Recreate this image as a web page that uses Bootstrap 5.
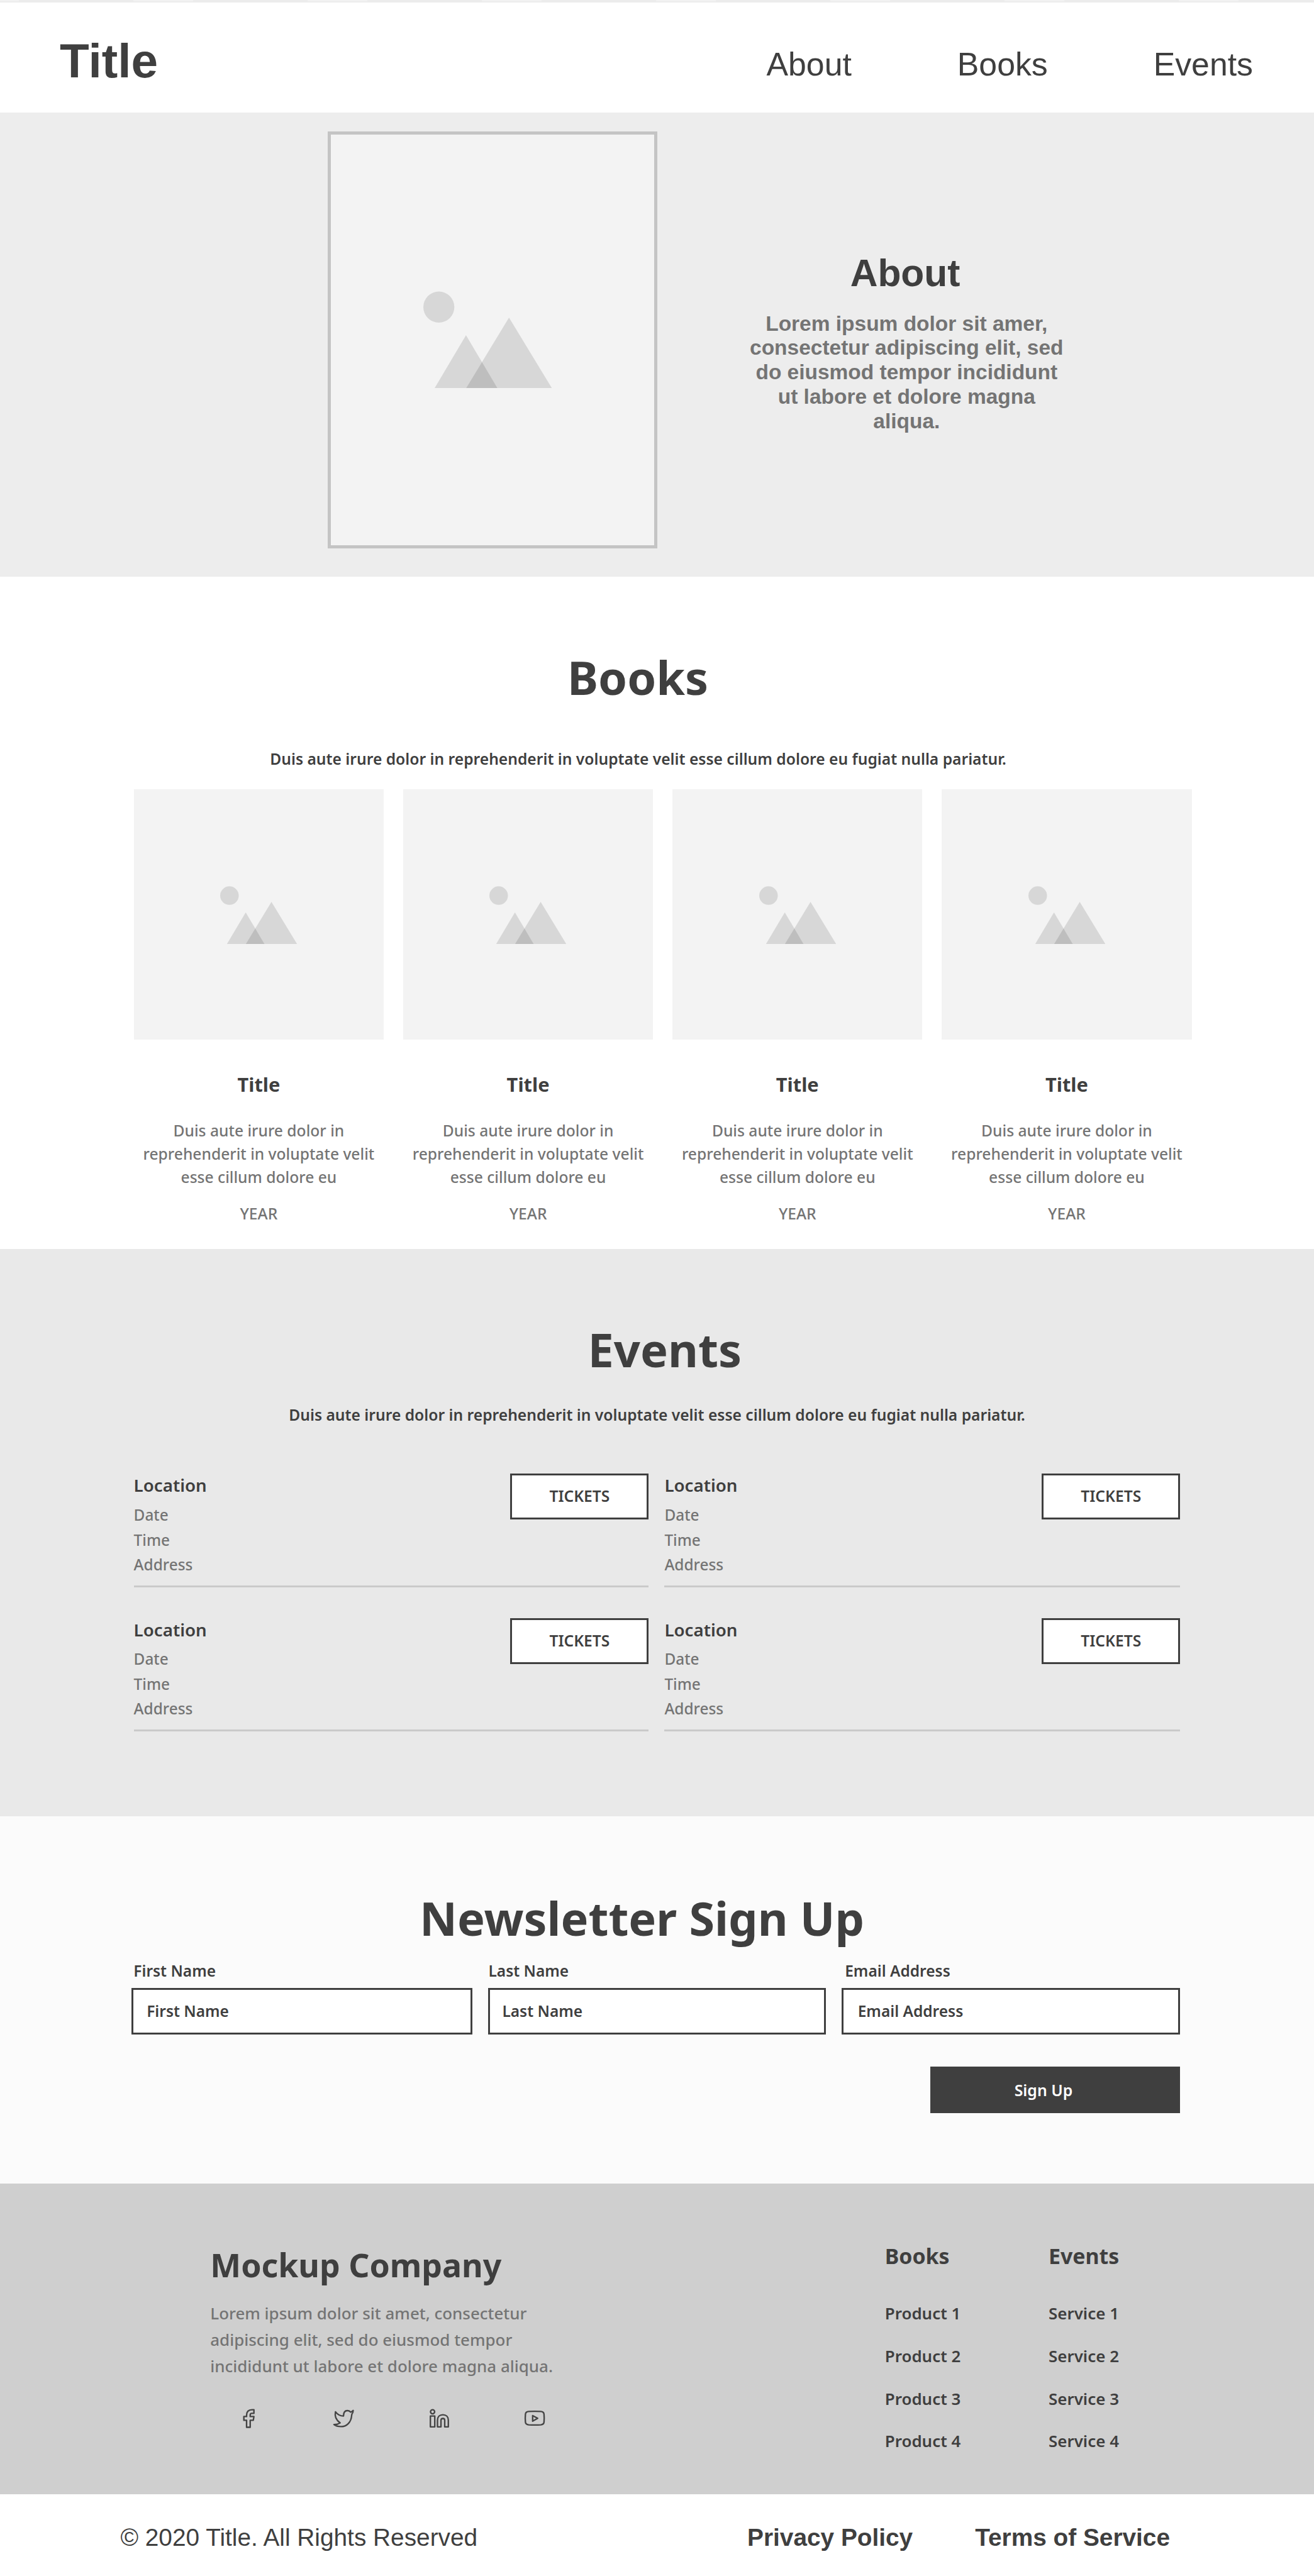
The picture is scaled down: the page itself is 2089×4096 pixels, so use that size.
<!DOCTYPE html>
<html lang="en">
<head>
<meta charset="utf-8">
<meta name="viewport" content="width=device-width, initial-scale=1">
<title>Title</title>
<link href="https://cdn.jsdelivr.net/npm/bootstrap@5.3.0/dist/css/bootstrap.min.css" rel="stylesheet">
<style>
  :root { --ink: #3f3f3f; --soft: #747474; }
  body { font-family: "Noto Sans", sans-serif; color: var(--ink); font-size: 24.62px; background: #fff; }
  h1, h2, h3, p, ul { margin: 0; }
  a { color: inherit; text-decoration: none; }
  .arial { font-family: "Liberation Sans", Arial, sans-serif; }
  .soft { color: var(--soft); }

  .top-strip { height: 3.7px; background: repeating-linear-gradient(90deg, #f2f2f2 0 95px, #ececec 95px 277px) -65px 0 / 2160px 2px no-repeat #ececec; }
  .site-header { height: 175.5px; padding: 48.5px 97px 0 95.1px; }
  .site-header .navbar-brand { font-size: 76.5px; line-height: 90px; font-weight: 700; color: var(--ink); padding: 0; margin: 0; }
  .main-links { gap: 167.9px; padding-top: 19.7px; font-size: 51.8px; line-height: 60px; }
  .main-links .nav-link { padding: 0; color: var(--ink); }

  .hero { height: 738.1px; background: #ededed; padding: 29.6px 0 0 520.5px; gap: 141px; }
  .hero-img { width: 524.8px; height: 663px; border: 5px solid #c4c4c4; background: #f3f3f3; }
  .hero-img svg { width: 204.6px; height: 154.6px; margin: 248.9px 0 0 147px; }
  .hero-text { width: 510px; padding-top: 190.2px; }
  .hero-text h2 { font-size: 60.5px; line-height: 70px; font-weight: 700; padding-right: 4.5px; }
  .hero-text p { margin-top: 26.6px; font-size: 33.48px; line-height: 38.85px; font-weight: 700; }

  .sec-title { font-size: 73.8px; line-height: 100px; font-weight: 700; }
  .sec-sub { line-height: 37px; font-weight: 600; }

  .books { height: 1069.2px; padding-top: 109.7px; }
  .books .sec-title { padding-right: 61px; }
  .books .sec-sub { margin-top: 60.9px; padding-right: 60px; }
  .book-grid { gap: 30.8px; margin: 30.6px 0 0 212.7px; }
  .book-item { width: 397.4px; }
  .book-img { height: 397.5px; background: #f3f3f3; }
  .book-img svg { width: 122.5px; height: 92.4px; margin: 153.1px 0 0 137.5px; }
  .book-item h3 { margin-top: 50px; font-size: 30.8px; line-height: 42px; font-weight: 700; }
  .book-item p { line-height: 36.9px; font-weight: 500; }
  .book-desc { margin-top: 35.2px; }
  .book-year { margin-top: 21.3px; }

  .events { height: 901.7px; background: #e9e9e9; padding-top: 109.3px; }
  .events .sec-title { padding-left: 24.5px; }
  .events .sec-sub { margin-top: 35.2px; }
  .event-grid { display: grid; grid-template-columns: 818.8px 819.8px; gap: 46.8px 25px; margin: 73.4px 0 0 212.6px; }
  .event-item { height: 182.6px; border-bottom: 3px solid #cacaca; }
  .event-item h3 { font-size: 27.7px; line-height: 40px; font-weight: 600; margin-bottom: 7.7px; }
  .event-item li { font-size: 24.4px; line-height: 39.5px; font-weight: 500; }
  .btn-box { border-radius: 0; border: 3px solid var(--ink); background: #fff; color: var(--ink); width: 220px; height: 73px; margin-top: 2px; padding: 0; font-size: 24.62px; font-weight: 600; }

  .signup { height: 583.5px; background: #fbfbfb; padding-top: 112.3px; }
  .signup .sec-title { padding-right: 48px; font-size: 73.7px; }
  .field-row { gap: 25px; margin: 15.6px 0 0 208.9px; }
  .field-row label { font-size: 24.5px; line-height: 36px; font-weight: 600; margin: 0 0 9.1px 3.4px; }
  .field-row .form-control { height: 73.6px; border: 3px solid var(--ink); border-radius: 0; background: #fff; padding: 0 21.3px; font-size: 24.5px; font-weight: 600; color: var(--ink); }
  .field-row .form-control::placeholder { color: var(--ink); opacity: 1; }
  .f-one { width: 542px; } .f-two { width: 537.3px; } .f-three { width: 538px; }
  .field-row .f-two label { margin-left: .6px; }
  .field-row .f-two .form-control { padding-left: 19.5px; }
  .field-row .f-three label { margin-left: 5px; }
  .field-row .f-three .form-control { padding-left: 22.5px; }
  .btn-dark-box { border: 0; border-radius: 0; background: var(--ink); color: #fff; width: 396.3px; height: 73.8px; margin: 51.6px 213.4px 0 0; padding: 0 37px 0 0; font-size: 24.8px; font-weight: 600; }

  .site-footer { height: 493.9px; background: #cfcfcf; padding-left: 334.3px; }
  .company { width: 560px; padding-top: 94.2px; }
  .company h2 { font-size: 51.8px; line-height: 70px; font-weight: 700; white-space: nowrap; }
  .company p { margin-top: 22.1px; font-size: 25.93px; line-height: 41.9px; font-weight: 500; }
  .social { gap: 111.6px; margin: 41.1px 0 0 41.3px; }
  .social svg { width: 40px; height: 40px; fill: none; stroke: #444; stroke-width: 11.5; stroke-linejoin: round; display: block; }
  .foot-col { padding-top: 92.5px; width: 260.3px; }
  .foot-col h3 { font-size: 33.9px; line-height: 46px; font-weight: 700; margin-bottom: 34.8px; }
  .foot-col li { font-size: 25.95px; line-height: 67.8px; font-weight: 600; }
  .foot-gap { margin-left: 512.4px; }

  .legal { height: 130.4px; padding: 39.7px 229px 0 191.4px; font-size: 38.8px; line-height: 60px; }
  .legal-links { gap: 99px; font-weight: 700; }
</style>
</head>
<body>
<svg width="0" height="0" class="position-absolute" aria-hidden="true">
  <symbol id="picture" viewBox="0 0 199 150" preserveAspectRatio="none">
    <g fill="#000" fill-opacity=".115">
      <circle cx="24" cy="24.5" r="24"/>
      <path d="M17.2 150 66 67.8 114.8 150Z"/>
      <path d="M66 150 132.5 40.7 199 150Z"/>
    </g>
  </symbol>
</svg>

<div class="top-strip"></div>
<header class="site-header arial d-flex justify-content-between align-items-start">
  <a class="navbar-brand" href="#">Title</a>
  <nav class="main-links nav">
    <a class="nav-link" href="#about">About</a>
    <a class="nav-link" href="#books">Books</a>
    <a class="nav-link" href="#events">Events</a>
  </nav>
</header>

<section id="about" class="hero arial d-flex">
  <div class="hero-img"><svg class="d-block"><use href="#picture"/></svg></div>
  <div class="hero-text text-center">
    <h2>About</h2>
    <p class="soft">Lorem ipsum dolor sit amer, consectetur adipiscing elit, sed do eiusmod tempor incididunt ut labore et dolore magna aliqua.</p>
  </div>
</section>

<section id="books" class="books">
  <h2 class="sec-title text-center">Books</h2>
  <p class="sec-sub text-center">Duis aute irure dolor in reprehenderit in voluptate velit esse cillum dolore eu fugiat nulla pariatur.</p>
  <div class="book-grid d-flex text-center">
    <article class="book-item">
      <div class="book-img d-flex"><svg><use href="#picture"/></svg></div>
      <h3>Title</h3>
      <p class="book-desc soft">Duis aute irure dolor in reprehenderit in voluptate velit esse cillum dolore eu</p>
      <p class="book-year soft">YEAR</p>
    </article>
    <article class="book-item">
      <div class="book-img d-flex"><svg><use href="#picture"/></svg></div>
      <h3>Title</h3>
      <p class="book-desc soft">Duis aute irure dolor in reprehenderit in voluptate velit esse cillum dolore eu</p>
      <p class="book-year soft">YEAR</p>
    </article>
    <article class="book-item">
      <div class="book-img d-flex"><svg><use href="#picture"/></svg></div>
      <h3>Title</h3>
      <p class="book-desc soft">Duis aute irure dolor in reprehenderit in voluptate velit esse cillum dolore eu</p>
      <p class="book-year soft">YEAR</p>
    </article>
    <article class="book-item">
      <div class="book-img d-flex"><svg><use href="#picture"/></svg></div>
      <h3>Title</h3>
      <p class="book-desc soft">Duis aute irure dolor in reprehenderit in voluptate velit esse cillum dolore eu</p>
      <p class="book-year soft">YEAR</p>
    </article>
  </div>
</section>

<section id="events" class="events">
  <h2 class="sec-title text-center">Events</h2>
  <p class="sec-sub text-center">Duis aute irure dolor in reprehenderit in voluptate velit esse cillum dolore eu fugiat nulla pariatur.</p>
  <div class="event-grid">
    <article class="event-item d-flex justify-content-between align-items-start">
      <div><h3>Location</h3><ul class="list-unstyled soft"><li>Date</li><li>Time</li><li>Address</li></ul></div>
      <button type="button" class="btn btn-box">TICKETS</button>
    </article>
    <article class="event-item d-flex justify-content-between align-items-start">
      <div><h3>Location</h3><ul class="list-unstyled soft"><li>Date</li><li>Time</li><li>Address</li></ul></div>
      <button type="button" class="btn btn-box">TICKETS</button>
    </article>
    <article class="event-item d-flex justify-content-between align-items-start">
      <div><h3>Location</h3><ul class="list-unstyled soft"><li>Date</li><li>Time</li><li>Address</li></ul></div>
      <button type="button" class="btn btn-box">TICKETS</button>
    </article>
    <article class="event-item d-flex justify-content-between align-items-start">
      <div><h3>Location</h3><ul class="list-unstyled soft"><li>Date</li><li>Time</li><li>Address</li></ul></div>
      <button type="button" class="btn btn-box">TICKETS</button>
    </article>
  </div>
</section>

<section class="signup">
  <h2 class="sec-title text-center">Newsletter Sign Up</h2>
  <form>
    <div class="field-row d-flex">
      <div class="f-one"><label class="d-block" for="first">First Name</label><input id="first" class="form-control" type="text" placeholder="First Name"></div>
      <div class="f-two"><label class="d-block" for="last">Last Name</label><input id="last" class="form-control" type="text" placeholder="Last Name"></div>
      <div class="f-three"><label class="d-block" for="email">Email Address</label><input id="email" class="form-control" type="email" placeholder="Email Address"></div>
    </div>
    <div class="d-flex justify-content-end"><button type="button" class="btn btn-dark-box">Sign Up</button></div>
  </form>
</section>

<footer>
  <div class="site-footer d-flex align-items-start">
    <div class="company">
      <h2>Mockup Company</h2>
      <p class="soft">Lorem ipsum dolor sit amet, consectetur adipiscing elit, sed do eiusmod tempor incididunt ut labore et dolore magna aliqua.</p>
      <div class="social d-flex">
        <a href="#" aria-label="Facebook"><svg viewBox="30 97 195 195"><path d="M165 129H150C122 129 108 145 108 172V182H87V211H108V265H136V211H160L165 182H136V170C136 162 140 157 148 157H165Z"/></svg></a>
        <a href="#" aria-label="Twitter"><svg viewBox="769 97 195 195"><path d="M937 135 934 152C928 158 926 165 925 175C922 225 888 260 842 260C822 260 800 254 788 244C805 245 822 240 836 231C812 215 790 190 800 145C815 165 838 178 862 178C862 150 872 136 893 136C903 136 912 141 918 148C926 146 932 141 937 135Z"/></svg></a>
        <a href="#" aria-label="LinkedIn"><svg viewBox="67.5 97 195 195"><circle cx="110" cy="145" r="16"/><path d="M93 178H127V262H93ZM148 262V210C148 184 165 168 190 168C215 168 232 184 232 210V262H204V212C204 202 199 197 190 197C180 197 175 202 175 212V262Z"/></svg></a>
        <a href="#" aria-label="YouTube"><svg viewBox="806 97 195 195"><path d="M857 143Q904 140 951 143Q974 144 976 164Q979 195 976 226Q974 244 951 246Q904 249 857 246Q834 244 832 226Q829 195 832 164Q834 144 857 143Z"/><path d="M888 175 927 196 888 218Z"/></svg></a>
      </div>
    </div>
    <div class="foot-col foot-gap">
      <h3>Books</h3>
      <ul class="list-unstyled"><li>Product 1</li><li>Product 2</li><li>Product 3</li><li>Product 4</li></ul>
    </div>
    <div class="foot-col">
      <h3>Events</h3>
      <ul class="list-unstyled"><li>Service 1</li><li>Service 2</li><li>Service 3</li><li>Service 4</li></ul>
    </div>
  </div>
  <div class="legal arial d-flex justify-content-between">
    <span>© 2020 Title. All Rights Reserved</span>
    <div class="legal-links d-flex"><a href="#">Privacy Policy</a><a href="#">Terms of Service</a></div>
  </div>
</footer>
<script src="https://cdn.jsdelivr.net/npm/bootstrap@5.3.0/dist/js/bootstrap.bundle.min.js"></script>
</body>
</html>
